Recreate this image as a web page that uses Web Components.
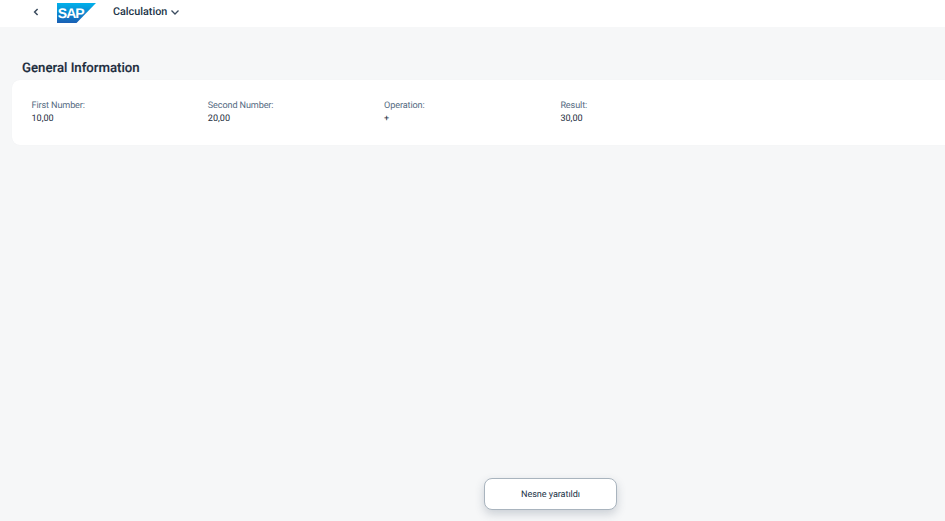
<!DOCTYPE html>
<html lang="en"><head><meta charset="utf-8"><title>Calculation</title>
<style>
html,body{margin:0;height:100%;overflow:hidden}
body{background:#f6f7f8;font-family:"Roboto","Liberation Sans",sans-serif;color:#1d2d3e;text-rendering:geometricPrecision}
</style></head><body>
<app-shell>
  <app-header slot="header" title-text="Calculation"></app-header>
  <section-title>General Information</section-title>
  <info-card>
    <info-field label="First Number:">10,00</info-field>
    <info-field label="Second Number:">20,00</info-field>
    <info-field label="Operation:">+</info-field>
    <info-field label="Result:">30,00</info-field>
  </info-card>
  <toast-message>Nesne yaratıldı</toast-message>
</app-shell>
<script>
function def(name,html,setup){
  customElements.define(name,class extends HTMLElement{
    connectedCallback(){
      if(this.shadowRoot)return;
      const r=this.attachShadow({mode:"open"});
      r.innerHTML=html;
      if(setup)setup(this,r);
    }
  });
}
def("app-shell",`<style>:host{display:flex;flex-direction:column;position:relative;width:100%;height:100vh;overflow:hidden}</style><slot name="header"></slot><slot></slot>`);
def("app-header",`<style>
:host{display:flex;align-items:center;height:27px;background:#fff;flex:none;padding:0 0 3px 31.5px;box-sizing:border-box}
.back{width:8px;height:12px;margin-right:17.5px;display:block}
.logo{width:39px;height:21px;display:block;margin-right:17px}
.t{font:500 10.8px Roboto,sans-serif;color:#223548;margin-top:-.5px}
.chev{width:10px;height:7px;margin-left:3px;display:block}
</style>
<svg class="back" viewBox="0 0 8 12"><path d="M5.6 3 2.6 6l3 3" fill="none" stroke="#3a4b5e" stroke-width="1.5"/></svg>
<svg class="logo" viewBox="0 0 39 21"><defs><linearGradient id="g" x1="0" y1="0" x2="0" y2="1"><stop offset="0" stop-color="#00b1eb"/><stop offset="1" stop-color="#1a5fb4"/></linearGradient></defs><path d="M0 1H39L19.5 21H0Z" fill="url(#g)"/><text x=".8" y="15.5" font-family="Liberation Sans" font-weight="700" font-size="14" letter-spacing="-1" fill="#fff">SAP</text></svg>
<span class="t"></span>
<svg class="chev" viewBox="0 0 10 7"><path d="M1.5 1.5 5 5l3.5-3.5" fill="none" stroke="#3a4b5e" stroke-width="1.3"/></svg>`,
(h,r)=>{r.querySelector(".t").textContent=h.getAttribute("title-text")});
def("section-title",`<style>:host{display:block;margin:33px 0 0 22px;height:20px;font:500 13.2px/18px Roboto,sans-serif;color:#1d2d3e;-webkit-text-stroke:.15px #1d2d3e}</style><slot></slot>`);
def("info-card",`<style>:host{display:grid;grid-template-columns:repeat(4,176.3px);margin-left:12px;width:1000px;height:65px;box-sizing:border-box;padding:19.5px 0 0 19.5px;background:#fff;border-radius:8px 0 0 8px;box-shadow:0 0 1px rgba(30,50,80,.06)}</style><slot></slot>`);
def("info-field",`<style>:host{display:block;font:400 9.1px/13px Roboto,sans-serif;color:#1d2d3e}
.l{color:#556b82;display:block;letter-spacing:-.12px}.v{display:block}</style><span class="l"></span><span class="v"><slot></slot></span>`,
(h,r)=>{r.querySelector(".l").textContent=h.getAttribute("label")});
def("toast-message",`<style>:host{position:absolute;left:484px;top:478px;width:133px;height:32px;box-sizing:border-box;padding-top:1px;display:flex;align-items:center;justify-content:center;background:#fff;border:1px solid #a9b4be;border-radius:8px;box-shadow:0 4px 10px rgba(50,70,90,.22);font:400 9.1px Roboto,sans-serif;letter-spacing:-.06px;color:#223548}</style><slot></slot>`);
</script>
</body></html>
